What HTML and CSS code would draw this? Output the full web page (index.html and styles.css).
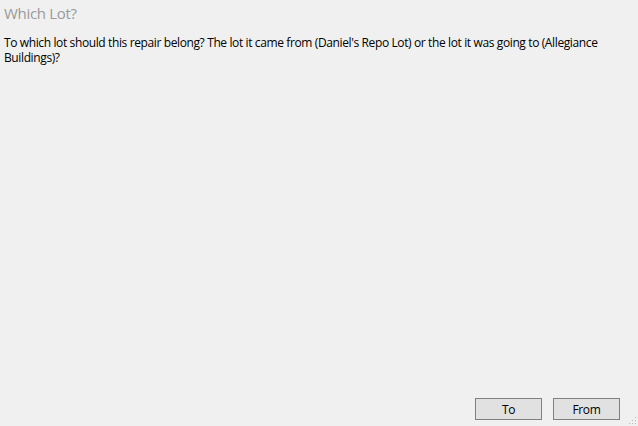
FILE: index.html
```html
<!DOCTYPE html>
<html>
<head>
<meta charset="utf-8">
<link rel="stylesheet" href="styles.css">
</head>
<body>
<div class="dialog">
  <div class="title">Which Lot?</div>
  <p class="message">To which lot should this repair belong? The lot it came from (Daniel's Repo Lot) or the lot it was going to (Allegiance Buildings)?</p>
  <div class="buttons">
    <button class="btn">To</button>
    <button class="btn">From</button>
  </div>
  <div class="grip"></div>
</div>
</body>
</html>
```
FILE: styles.css
```css
html, body {
  margin: 0;
  padding: 0;
  width: 638px;
  height: 426px;
  background: #f0f0f0;
  overflow: hidden;
}
.dialog {
  position: relative;
  width: 638px;
  height: 426px;
  display: flex;
  flex-direction: column;
  font-family: "Open Sans", "Noto Sans", sans-serif;
  font-size: 12px;
  letter-spacing: -0.38px;
  color: #000;
}
.title {
  color: #9a9a9a;
  font-size: 15px;
  letter-spacing: -0.3px;
  padding: 3px 0 0 4px;
  line-height: 20px;
}
.message {
  margin: 12px 0 0 4px;
  width: 622px;
  line-height: 15px;
  flex: 1;
}
.buttons {
  display: flex;
  justify-content: flex-end;
  gap: 11px;
  padding: 0 18px 6px 0;
}
.btn {
  width: 67px;
  height: 22px;
  background: #e1e1e1;
  border: 1px solid #7f7f7f;
  font-family: inherit;
  font-size: 12px;
  letter-spacing: -0.3px;
  color: #000;
  padding: 0;
}
.grip {
  position: absolute;
  right: 2px;
  bottom: 2px;
  width: 8px;
  height: 8px;
  background:
    radial-gradient(circle, #b8b8b8 0.8px, transparent 1px) 0 0 / 3px 3px;
  clip-path: polygon(100% 0, 100% 100%, 0 100%);
}
```
